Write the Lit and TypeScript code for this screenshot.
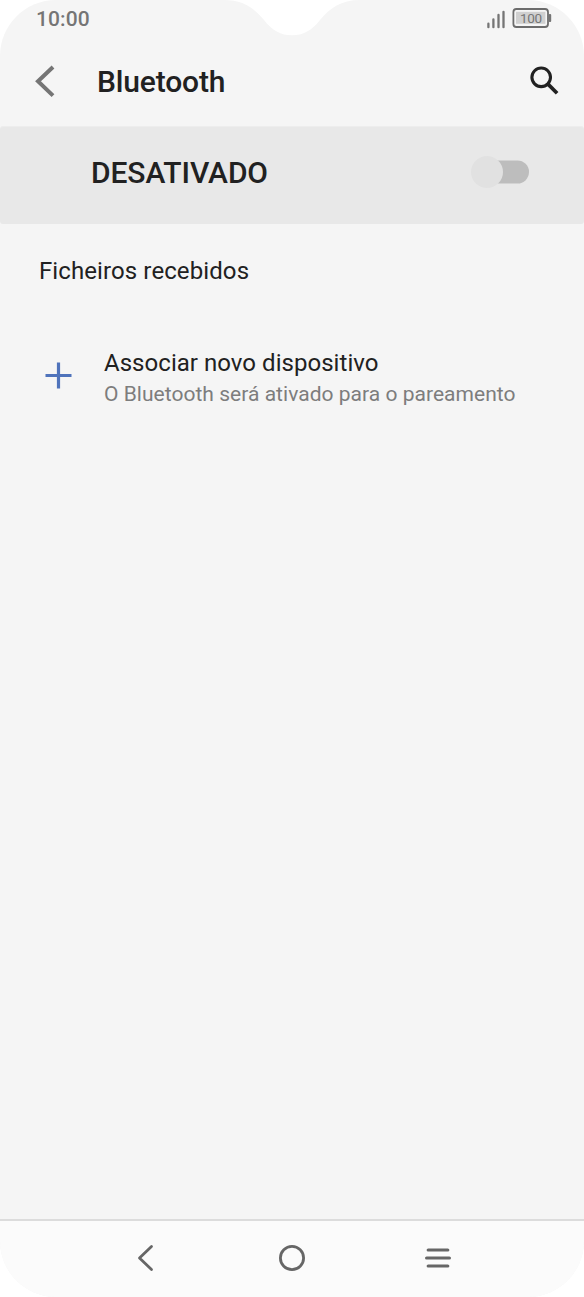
import { LitElement, html, css } from "lit";
import { customElement } from "lit/decorators.js";

@customElement("app-root")
export class AppRoot extends LitElement {
  static styles = css`
    :host {
      display: block;
      background: #fff;
      font-family: Roboto, "Liberation Sans", sans-serif;
      color: #212121;
    }
    .phone {
      position: relative;
      display: flex;
      flex-direction: column;
      width: 584px;
      height: 1297px;
      background: #f5f5f5;
      border-radius: 56px;
      overflow: hidden;
      white-space: nowrap;
    }
    svg {
      display: block;
      flex: none;
    }
    .notch {
      position: absolute;
      top: 0;
      left: 222px;
    }
    .status {
      display: flex;
      justify-content: space-between;
      height: 37px;
      padding: 0 32px 0 36px;
    }
    .time {
      font-size: 21px;
      line-height: 39px;
      font-weight: 500;
      letter-spacing: 0.1px;
      color: #757575;
    }
    .charge {
      font: 400 13.5px Roboto, sans-serif;
      fill: #757575;
    }
    .bar {
      display: flex;
      align-items: center;
      height: 89px;
      padding: 0 24px 0 34px;
      box-sizing: border-box;
    }
    .title {
      flex: 1;
      margin: 0 0 0 41px;
      font-size: 30px;
      line-height: 90px;
      font-weight: 500;
      letter-spacing: -0.15px;
    }
    .master {
      display: flex;
      align-items: center;
      justify-content: space-between;
      height: 98px;
      padding: 0 54px 6px 91px;
      box-sizing: border-box;
      border-top: 1px solid #ededed;
      background: #e8e8e8;
      border-radius: 3px;
      font-size: 30px;
      font-weight: 500;
      letter-spacing: -0.1px;
    }
    .switch {
      margin-top: -2px;
    }
    .files {
      height: 93px;
      padding-left: 39px;
      font-size: 24px;
      line-height: 94px;
      letter-spacing: 0.1px;
    }
    .pair {
      display: flex;
      align-items: flex-start;
      padding: 30px 0 0 44px;
      gap: 31px;
    }
    .plus {
      margin-top: 14px;
    }
    .name {
      font-size: 24px;
      line-height: 32px;
      letter-spacing: 0.04px;
    }
    .note {
      font-size: 21px;
      line-height: 30px;
      letter-spacing: 0.03px;
      color: #7d7d7d;
    }
    .nav {
      display: flex;
      justify-content: space-between;
      align-items: center;
      height: 78px;
      margin-top: auto;
      padding: 0 131px 2px 130px;
      box-sizing: border-box;
      border-top: 2px solid #dcdcdc;
      background: #fbfbfb;
    }
  `;

  render() {
    return html`
      <div class="phone">
        <svg class="notch" width="140" height="37" viewBox="0 0 140 37">
          <path fill="#fff" d="M2 0C21 0 32 8 42 20C50 30.5 59 35.3 70 35.3C81 35.3 90 30.5 98 20C108 8 119 0 138 0Z" />
        </svg>
        <div class="status">
          <span class="time">10:00</span>
          <svg width="66" height="37" viewBox="0 0 66 37">
            <path d="M2.4 23.7V27.2M7.4 19.5V27.2M12.5 15V27.2M17.5 11.8V27.2" stroke="#757575" stroke-width="2.3" stroke-linecap="round" />
            <rect x="27.4" y="9" width="34.6" height="18" rx="3" fill="none" stroke="#6c6c6c" stroke-width="1.8" />
            <rect x="30" y="11.8" width="29.4" height="12" fill="#d0d0d0" />
            <rect x="62.6" y="14" width="2.6" height="8" rx="1" fill="#757575" />
            <text class="charge" x="34" y="22.8" textLength="22">100</text>
          </svg>
        </div>
        <header class="bar">
          <svg width="22" height="36" viewBox="0 0 22 36">
            <path d="M19 3L4 17.3L19 31.6" fill="none" stroke="#757575" stroke-width="4" />
          </svg>
          <h1 class="title">Bluetooth</h1>
          <svg width="32" height="32" viewBox="0 0 32 32">
            <circle cx="13.2" cy="11.3" r="9.3" fill="none" stroke="#212121" stroke-width="3.1" />
            <path d="M19.5 17.6L29.1 27.2" stroke="#212121" stroke-width="3.7" />
          </svg>
        </header>
        <div class="master">
          <span>DESATIVADO</span>
          <svg class="switch" width="60" height="34" viewBox="0 0 60 34">
            <rect x="6" y="5.5" width="53" height="23" rx="11.5" fill="#bdbdbd" />
            <circle cx="17" cy="17" r="16" fill="#e1e1e1" />
          </svg>
        </div>
        <div class="files">Ficheiros recebidos</div>
        <div class="pair">
          <svg class="plus" width="29" height="29" viewBox="0 0 29 29">
            <path d="M14.5 1.5V27.5M1.5 14.5H27.5" stroke="#4f73bb" stroke-width="3.2" />
          </svg>
          <div>
            <div class="name">Associar novo dispositivo</div>
            <div class="note">O Bluetooth será ativado para o pareamento</div>
          </div>
        </div>
        <nav class="nav">
          <svg width="30" height="30" viewBox="0 0 30 30">
            <path d="M21.5 3.5L9.5 15L21.5 26.5" fill="none" stroke="#666" stroke-width="2.8" stroke-linecap="round" stroke-linejoin="round" />
          </svg>
          <svg width="30" height="30" viewBox="0 0 30 30">
            <circle cx="15" cy="15" r="11.6" fill="none" stroke="#666" stroke-width="2.8" />
          </svg>
          <svg width="30" height="30" viewBox="0 0 30 30">
            <path d="M5.2 7H24.8M3.6 15H26.4M5.2 23H24.8" stroke="#666" stroke-width="3.2" stroke-linecap="round" />
          </svg>
        </nav>
      </div>
    `;
  }
}
